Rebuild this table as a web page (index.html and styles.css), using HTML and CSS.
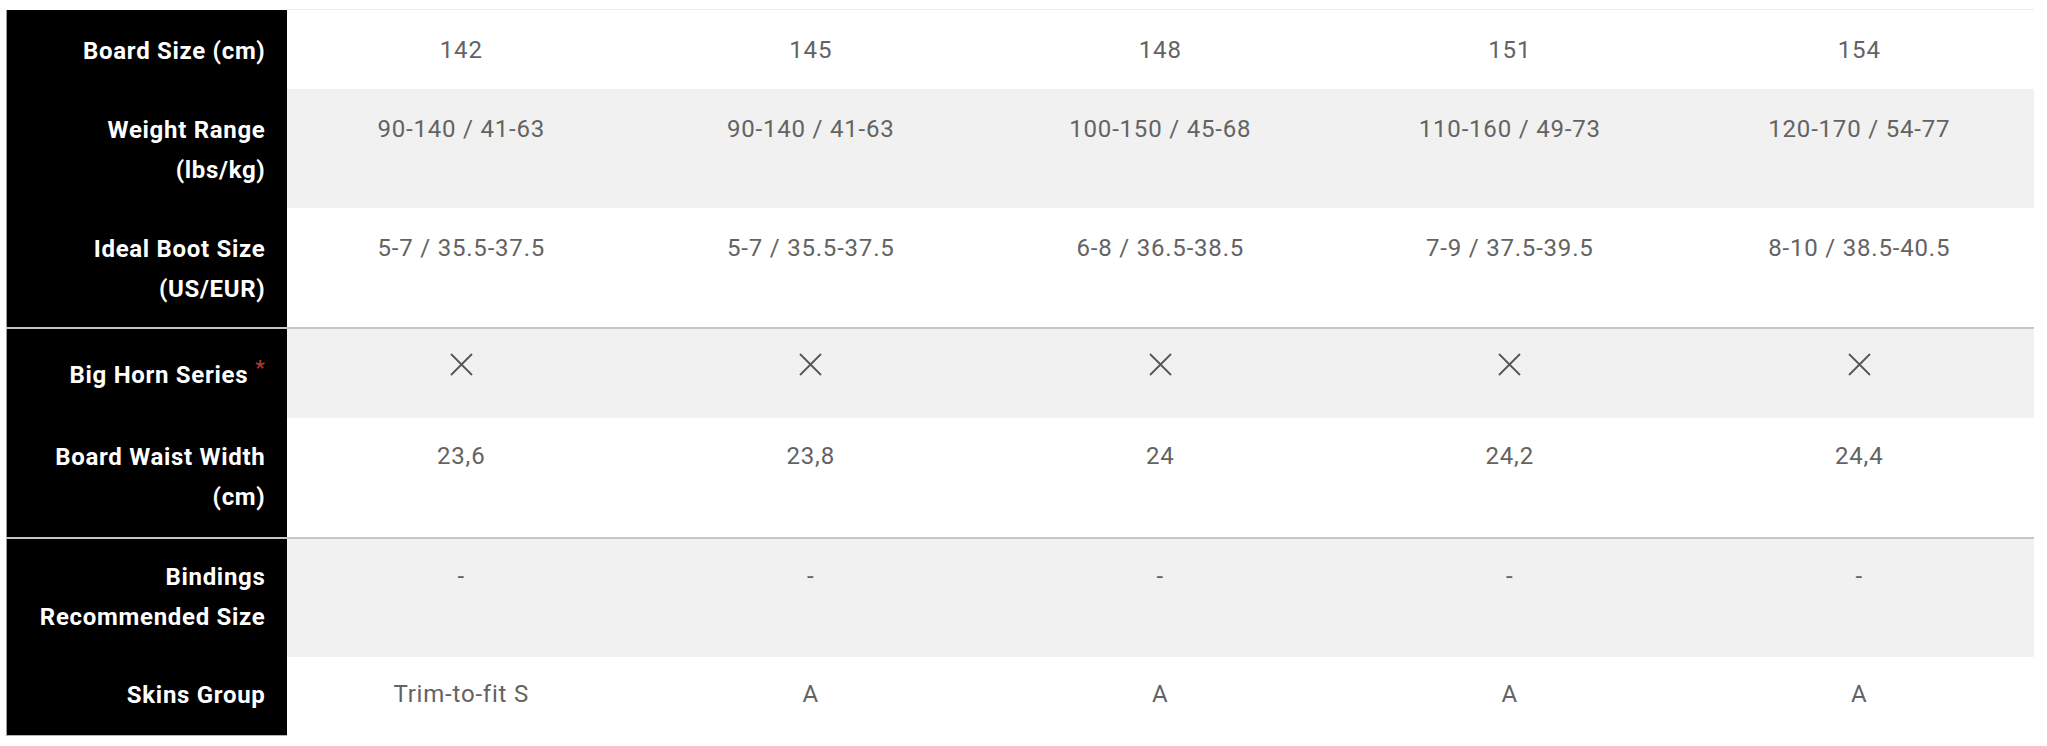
FILE: index.html
```html
<!DOCTYPE html>
<html lang="en">
<head>
<meta charset="utf-8">
<title>Board specs</title>
<link rel="stylesheet" href="styles.css">
</head>
<body>
<div class="wrap">
<table class="specs">
<colgroup>
<col class="c-label">
<col><col><col><col><col>
</colgroup>
<tbody class="group first">
<tr class="light"><th>Board Size (cm)</th><td>142</td><td>145</td><td>148</td><td>151</td><td>154</td></tr>
<tr class="shade"><th>Weight Range<br>(lbs/kg)</th><td>90-140 / 41-63</td><td>90-140 / 41-63</td><td>100-150 / 45-68</td><td>110-160 / 49-73</td><td>120-170 / 54-77</td></tr>
<tr class="light"><th>Ideal Boot Size<br>(US/EUR)</th><td>5-7 / 35.5-37.5</td><td>5-7 / 35.5-37.5</td><td>6-8 / 36.5-38.5</td><td>7-9 / 37.5-39.5</td><td>8-10 / 38.5-40.5</td></tr>
</tbody>
<tbody class="group">
<tr class="shade series"><th>Big Horn Series<span class="req">*</span></th>
<td><svg class="cross" viewBox="0 0 23 23" width="23" height="23"><path d="M1 1L22 22M22 1L1 22"/></svg></td>
<td><svg class="cross" viewBox="0 0 23 23" width="23" height="23"><path d="M1 1L22 22M22 1L1 22"/></svg></td>
<td><svg class="cross" viewBox="0 0 23 23" width="23" height="23"><path d="M1 1L22 22M22 1L1 22"/></svg></td>
<td><svg class="cross" viewBox="0 0 23 23" width="23" height="23"><path d="M1 1L22 22M22 1L1 22"/></svg></td>
<td><svg class="cross" viewBox="0 0 23 23" width="23" height="23"><path d="M1 1L22 22M22 1L1 22"/></svg></td>
</tr>
<tr class="light waist"><th>Board Waist Width<br>(cm)</th><td>23,6</td><td>23,8</td><td>24</td><td>24,2</td><td>24,4</td></tr>
</tbody>
<tbody class="group tight">
<tr class="shade"><th>Bindings<br>Recommended Size</th><td>-</td><td>-</td><td>-</td><td>-</td><td>-</td></tr>
<tr class="light last"><th>Skins Group</th><td>Trim-to-fit S</td><td>A</td><td>A</td><td>A</td><td>A</td></tr>
</tbody>
</table>
</div>
</body>
</html>
```

FILE: styles.css
```css
html, body {
  margin: 0;
  padding: 0;
  background: #ffffff;
}

body {
  font-family: Roboto, "Liberation Sans", Arial, sans-serif;
}

.wrap {
  padding: 9px 0 0 6px;
}

.specs {
  width: 2028px;
  border-collapse: collapse;
  table-layout: fixed;
}

.specs .c-label {
  width: 280px;
}

.specs th {
  background: #000000;
  color: #ffffff;
  text-align: right;
  font-weight: 700;
  font-size: 24px;
  letter-spacing: 0.7px;
  line-height: 40px;
  padding: 21px 21px 18px 10px;
  vertical-align: top;
  border-left: 1px solid #9a9a9a;
}

.specs td {
  text-align: center;
  color: #636363;
  font-size: 24px;
  letter-spacing: 0.8px;
  font-weight: 400;
  line-height: 40px;
  padding: 20px 10px 19px;
  vertical-align: top;
}

.specs .light td {
  background: #ffffff;
}

.specs .shade td {
  background: #f1f1f1;
}

.specs .first tr:first-child th {
  border-top: 1px solid #ffffff;
}

.specs .first tr:first-child td {
  border-top: 1px solid #ececec;
}

.specs .group + .group tr:first-child > * {
  border-top: 2px solid #c6c6c6;
}

.specs .last th {
  border-bottom: 1px solid #b4b4b4;
}

.specs .series th {
  padding-top: 26px;
  padding-bottom: 23px;
}

.specs .series td {
  padding-top: 24px;
}

.specs .waist th {
  padding-top: 19px;
  padding-bottom: 20px;
}

.specs .waist td {
  padding-top: 18px;
  padding-bottom: 21px;
}

.specs .tight th {
  padding-top: 18px;
  padding-bottom: 20px;
}

.specs .tight td {
  padding-top: 17px;
  padding-bottom: 21px;
}

.req {
  color: #a83a2e;
  font-size: 21px;
  line-height: 0;
  vertical-align: 8px;
  margin-left: 7px;
}

.cross {
  display: block;
  margin: 0 auto;
}

.cross path {
  stroke: #555555;
  stroke-width: 1.8;
  fill: none;
}
```
